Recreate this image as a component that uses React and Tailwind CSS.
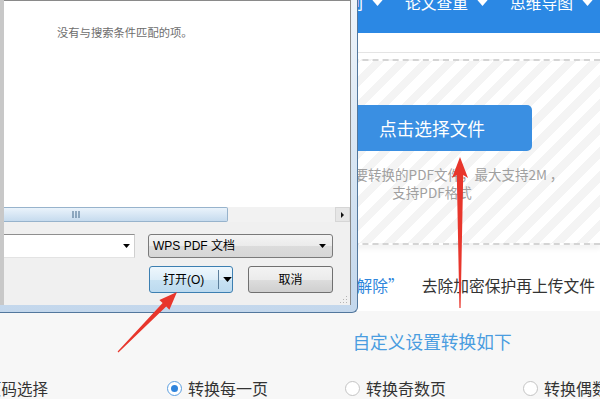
const cjk = "font-['Noto_Sans_CJK_SC',sans-serif]";
const ui = "font-['Liberation_Sans','Noto_Sans_CJK_SC',sans-serif]";

const navItems = ['格式转换', '文档翻译', '文字识别', '论文查重', '思维导图'];
const pageOptions = ['转换每一页', '转换奇数页', '转换偶数页'];

function Caret({ className }) {
  return (
    <svg viewBox="0 0 12 7" className={className}>
      <path d="M0 0h12L6 7z" fill="currentColor" />
    </svg>
  );
}

function Radio({ checked }) {
  return (
    <span
      className={`w-[15px] h-[15px] rounded-full border bg-white flex items-center justify-center shrink-0 ${
        checked ? 'border-[#5d9fe0]' : 'border-[#c4c4c4]'
      }`}
    >
      {checked && <span className="w-[7px] h-[7px] rounded-full bg-[#2f84dc]" />}
    </span>
  );
}

function FileDialog() {
  return (
    <div className="absolute left-0 top-0 w-[358px] h-[313px] flex flex-col pr-[6px] pb-[7px] border-r border-b border-[#52779d] rounded-br-[6px] bg-[linear-gradient(to_bottom,#eef4fa,#c3d7ec)] z-10">
      <div className="flex flex-1 min-h-0">
        <div className="w-[4px] bg-[#c8c8c8]" />
        <div className="flex-1 flex flex-col border-t border-r border-[#8a8a8a]">
          <div className={`h-[206px] bg-white pl-[53px] pt-[23px] text-[11.3px] leading-[16px] text-[#6d6d6d] ${cjk}`}>
            没有与搜索条件匹配的项。
          </div>
          <div className="h-[15px] flex bg-[#f2f2f2]">
            <div className="w-[224px] h-full border border-l-0 border-[#97b3cc] rounded-r-[2px] bg-[linear-gradient(to_bottom,#eaf3fb,#c6dbee)] flex items-center pl-[68px]">
              <svg viewBox="0 0 8 7" className="w-[8px] h-[7px]">
                <path d="M1 0v7M4 0v7M7 0v7" stroke="#5b7d9b" strokeWidth="1.2" />
              </svg>
            </div>
            <div className="flex-1" />
            <div className="w-[15px] h-full bg-[#e6e6e6] border border-[#d6d6d6] flex items-center justify-center">
              <svg viewBox="0 0 3 6" className="w-[3px] h-[6px]">
                <path d="M0 0l3 3-3 3z" fill="#111" />
              </svg>
            </div>
          </div>
          <div className={`flex-1 bg-[#f0f0f0] pt-[12px] relative ${ui}`}>
            <div className="flex h-[24px]">
              <div className="w-[131px] bg-white border-t border-r border-b border-t-[#8f8f8f] border-r-[#cfcfcf] border-b-[#e3e3e3] flex items-center justify-end pr-[4px]">
                <Caret className="w-[7px] h-[4px] text-black" />
              </div>
              <div className="ml-[13px] w-[185px] rounded-[3px] border border-[#7a7a7a] bg-[linear-gradient(to_bottom,#f4f4f4_0%,#ebebeb_50%,#dcdcdc_51%,#d6d6d6_100%)] flex items-center justify-between pl-[4px] pr-[6px] text-[12px] text-black">
                <span>WPS PDF 文档</span>
                <Caret className="w-[7px] h-[4px] text-black" />
              </div>
            </div>
            <div className="flex justify-end pr-[17px] mt-[8px] h-[27px] text-[12px] text-black">
              <div className="w-[84px] rounded-[3px] border border-[#3c7fb1] bg-[linear-gradient(to_bottom,#eef7fd_0%,#dcedf8_50%,#c8e2f3_51%,#bcdaef_100%)] flex items-center pl-[13px]">
                <span className="w-[41px] whitespace-nowrap">打开(O)</span>
                <span className="ml-[14px] w-px h-[19px] bg-[#5c7f9c]" />
                <Caret className="ml-[4px] w-[9px] h-[5px] text-black" />
              </div>
              <div className="ml-[15px] w-[85px] rounded-[3px] border border-[#707070] bg-[linear-gradient(to_bottom,#f3f3f3_0%,#ebebeb_50%,#dddddd_51%,#cfcfcf_100%)] flex items-center justify-center">
                取消
              </div>
            </div>
            <svg viewBox="0 0 8 8" className="absolute right-[2px] bottom-[2px] w-[8px] h-[8px]">
              <path d="M6 1h1v1H6zM6 4h1v1H6zM3 4h1v1H3zM6 7h1v1H6zM3 7h1v1H3zM0 7h1v1H0z" fill="#b4b4b4" />
            </svg>
          </div>
        </div>
      </div>
    </div>
  );
}

function Arrows() {
  return (
    <svg viewBox="0 0 600 399" className="absolute inset-0 w-[600px] h-[399px] pointer-events-none z-20">
      <path
        d="M177 292L169.4 309.7L166.2 306.6L118.4 352.4L117.6 351.6L162.6 303L159.4 299.9Z"
        fill="#e8362c"
      />
      <path d="M460 157L468 178L463.2 175L460.6 308L459.4 308L456.8 175L452 178Z" fill="#e8362c" />
    </svg>
  );
}

export default function App() {
  return (
    <div className={`relative w-[600px] h-[399px] overflow-hidden bg-white ${cjk}`}>
      <div className="flex flex-col h-full">
        <nav className="h-[33px] shrink-0 bg-[#2b88e4] flex pl-[90px] gap-[22px] overflow-hidden">
          {navItems.map((item) => (
            <div key={item} className="flex items-start gap-[9px] shrink-0 text-white">
              <span className="text-[15.75px] leading-none -mt-[5px] whitespace-nowrap">{item}</span>
              <Caret className="w-[11px] h-[6px]" />
            </div>
          ))}
        </nav>
        <div className="h-[20px] shrink-0 border-b border-[#e4e4e4]" />
        <section className="mt-[6px] h-[186px] shrink-0 border-y-2 border-dashed border-[#d4d4d4] bg-[repeating-linear-gradient(135deg,#ffffff_0px,#ffffff_9px,#f4f4f4_9px,#f4f4f4_17px)] shadow-[0_4px_5px_rgba(0,0,0,0.05)] flex flex-col items-center pl-[264px]">
          <button className="mt-[44px] w-[200px] h-[46px] rounded-[5px] bg-[#3a8fe2] text-white text-[17.7px]">
            点击选择文件
          </button>
          <p className="mt-[14px] text-[13.5px] leading-[18px] text-[#a0a0a0] text-center whitespace-nowrap">
            请选择需要转换的PDF文件，最大支持2M ，
            <br />
            支持PDF格式
          </p>
        </section>
        <div className="h-[66px] shrink-0 pt-[31px] flex justify-end pr-[5px] text-[15.75px] leading-[20px] whitespace-nowrap">
          <span className="text-[#333]">如文件已加密，请先点击</span>
          <span className="text-[#2f86dc]">“解除”</span>
          <span className="ml-[18px] text-[#333]">去除加密保护再上传文件</span>
        </div>
        <div className="flex-1 bg-[#f7f7f7] flex flex-col">
          <div className="pl-[264px] pt-[18px] flex justify-center">
            <span className="text-[17.7px] leading-[24px] text-[#4a9de0]">自定义设置转换如下</span>
          </div>
          <div className="mt-[24px] flex items-center h-[22px] text-[15.5px] leading-[22px] text-[#333] whitespace-nowrap">
            <span className="-ml-[14px] w-[62px] shrink-0">页码选择</span>
            <div className="ml-[119px] flex shrink-0">
              {pageOptions.map((opt, i) => (
                <label key={opt} className="w-[178px] flex items-center gap-[6px] shrink-0 text-[16px]">
                  <Radio checked={i === 0} />
                  <span>{opt}</span>
                </label>
              ))}
            </div>
          </div>
        </div>
      </div>
      <FileDialog />
      <Arrows />
    </div>
  );
}
